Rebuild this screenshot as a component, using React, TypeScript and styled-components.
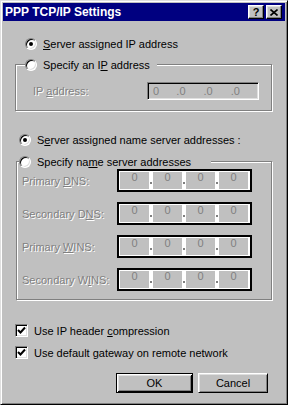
import React from 'react';
import styled, { createGlobalStyle } from 'styled-components';

const GlobalStyle = createGlobalStyle`
  html, body {
    margin: 0;
    padding: 0;
    background: #c0c0c0;
  }
  body {
    font-family: "Liberation Sans", Arial, sans-serif;
    font-size: 11px;
  }
`;

const Window = styled.div`
  width: 288px;
  height: 405px;
  box-sizing: border-box;
  background: #c0c0c0;
  border: 1px solid;
  border-color: #dfdfdf #000 #000 #dfdfdf;
  box-shadow: inset 1px 1px #fff, inset -1px -1px #808080;
  padding: 2px;
  display: flex;
  flex-direction: column;
`;

const TitleBar = styled.div`
  height: 18px;
  flex-shrink: 0;
  background: #000080;
  display: flex;
  align-items: center;
  padding: 0 3px 0 2px;
`;

const TitleText = styled.span`
  flex: 1;
  color: #fff;
  font-weight: bold;
  font-size: 12px;
  white-space: nowrap;
`;

const CaptionButton = styled.span<{ $gap?: number }>`
  width: 16px;
  height: 14px;
  box-sizing: border-box;
  margin-left: ${p => p.$gap ?? 0}px;
  background: #c0c0c0;
  border: 1px solid;
  border-color: #fff #000 #000 #fff;
  box-shadow: inset -1px -1px #808080, inset 1px 1px #dfdfdf;
  display: flex;
  align-items: center;
  justify-content: center;
  color: #000;
  font-weight: bold;
  font-size: 11px;
  line-height: 1;
`;

const Body = styled.div`
  display: flex;
  flex-direction: column;
  padding: 0 17px 0 12px;
`;

const OptionRow = styled.div<{ $top: number; $indent?: number }>`
  display: flex;
  align-items: center;
  height: 13px;
  gap: 6px;
  margin-top: ${p => p.$top}px;
  margin-left: ${p => p.$indent ?? 0}px;
`;

const Label = styled.span<{ $disabled?: boolean; $w?: number }>`
  color: ${p => (p.$disabled ? '#808080' : '#000')};
  text-shadow: ${p => (p.$disabled ? '1px 1px 0 #fff' : 'none')};
  white-space: nowrap;
  ${p => (p.$w ? `width: ${p.$w}px; flex-shrink: 0;` : '')}
`;

const RadioCircle = styled.span`
  width: 12px;
  height: 12px;
  box-sizing: border-box;
  flex-shrink: 0;
  border-radius: 50%;
  background: #fff;
  border: 1px solid;
  border-color: #808080 #fff #fff #808080;
  box-shadow: inset 1px 1px #000, inset -1px -1px #dfdfdf;
  display: flex;
  align-items: center;
  justify-content: center;
`;

const RadioDot = styled.span`
  width: 4px;
  height: 4px;
  border-radius: 50%;
  background: #000;
`;

const CheckBox = styled.span`
  width: 13px;
  height: 13px;
  box-sizing: border-box;
  flex-shrink: 0;
  background: #fff;
  border: 1px solid;
  border-color: #808080 #fff #fff #808080;
  box-shadow: inset 1px 1px #000, inset -1px -1px #dfdfdf;
  display: flex;
  align-items: center;
  justify-content: center;
`;

const Group = styled.fieldset<{ $top: number; $left: number; $width: number }>`
  margin: ${p => p.$top}px 0 0 ${p => p.$left}px;
  width: ${p => p.$width}px;
  min-width: 0;
  box-sizing: border-box;
  padding: 0;
  border: 1px solid #808080;
  box-shadow: inset 1px 1px #fff, 1px 1px #fff;
`;

const GroupContent = styled.div<{ $pad: string }>`
  padding: ${p => p.$pad};
`;

const Legend = styled.legend<{ $ml: number; $w: number }>`
  margin-left: ${p => p.$ml}px;
  width: ${p => p.$w}px;
  height: 13px;
  padding: 0;
  background: #c0c0c0;
  display: flex;
  align-items: center;
  gap: 6px;
`;

const FieldRow = styled.div`
  display: flex;
  align-items: center;
`;

const AddrGrid = styled.div`
  display: grid;
  grid-template-columns: 95px 135px;
  grid-auto-rows: 23px;
  row-gap: 10px;
  align-items: center;
`;

const IpBox = styled.div`
  width: 112px;
  height: 18px;
  box-sizing: border-box;
  border: 1px solid;
  border-color: #808080 #fff #fff #808080;
  box-shadow: inset 1px 1px #000, inset -1px -1px #dfdfdf;
  background: #c0c0c0;
  display: flex;
  align-items: center;
  padding-left: 1px;
  color: #808080;
`;

const IpPart = styled.span<{ $pad: number }>`
  width: 28px;
  padding-left: ${p => p.$pad}px;
  box-sizing: border-box;
  white-space: pre;
`;

const AddrBox = styled.div`
  width: 135px;
  height: 23px;
  box-sizing: border-box;
  border: 2px solid #000;
  background: #fff;
  display: flex;
  padding: 1px 2px 1px 1px;
`;

const AddrPart = styled.div`
  width: 29px;
  background: #c0c0c0;
  color: #808080;
  text-align: center;
  line-height: 11px;
`;

const AddrSep = styled.div`
  width: 4px;
  box-sizing: border-box;
  display: flex;
  justify-content: center;
  align-items: flex-end;
  padding-bottom: 5px;
`;

const SepDot = styled.span`
  width: 2px;
  height: 2px;
  background: #808080;
`;

const ButtonRow = styled.div`
  display: flex;
  justify-content: flex-end;
  gap: 5px;
  margin-top: 14px;
`;

const PushButton = styled.button<{ $w: number; $default?: boolean }>`
  width: ${p => p.$w}px;
  height: 20px;
  box-sizing: border-box;
  padding: 0;
  font-family: "Liberation Sans", Arial, sans-serif;
  font-size: 11px;
  color: #000;
  background: #c0c0c0;
  border: 1px solid;
  border-color: ${p => (p.$default ? '#000' : '#fff #000 #000 #fff')};
  box-shadow: ${p =>
    p.$default
      ? 'inset 1px 1px #fff, inset -1px -1px #000, inset 2px 2px #dfdfdf, inset -2px -2px #808080'
      : 'inset 1px 1px #dfdfdf, inset -1px -1px #808080'};
`;

const Radio = ({ checked }: { checked?: boolean }) => (
  <RadioCircle>{checked && <RadioDot />}</RadioCircle>
);

const Check = () => (
  <CheckBox>
    <svg width="9" height="9" viewBox="0 0 9 9">
      <polyline points="1,4 3.5,6.5 8,1.5" fill="none" stroke="#000" strokeWidth="2" />
    </svg>
  </CheckBox>
);

const CloseIcon = () => (
  <svg width="8" height="7" viewBox="0 0 8 7">
    <path d="M0.5 0.5 L7.5 6.5 M7.5 0.5 L0.5 6.5" stroke="#000" strokeWidth="1.6" />
  </svg>
);

const AddressField = () => (
  <AddrBox>
    {[0, 1, 2, 3].map(i => (
      <React.Fragment key={i}>
        {i > 0 && (
          <AddrSep>
            <SepDot />
          </AddrSep>
        )}
        <AddrPart>0</AddrPart>
      </React.Fragment>
    ))}
  </AddrBox>
);

const servers = [
  { pre: 'Primary ', key: 'D', post: 'NS:' },
  { pre: 'Secondary D', key: 'N', post: 'S:' },
  { pre: 'Primary ', key: 'W', post: 'INS:' },
  { pre: 'Secondary W', key: 'I', post: 'NS:' },
];

export default function App() {
  return (
    <>
      <GlobalStyle />
      <Window>
        <TitleBar>
          <TitleText>PPP TCP/IP Settings</TitleText>
          <CaptionButton>?</CaptionButton>
          <CaptionButton $gap={2}>
            <CloseIcon />
          </CaptionButton>
        </TitleBar>
        <Body>
          <OptionRow $top={16} $indent={10}>
            <Radio checked />
            <Label>
              <u>S</u>erver assigned IP address
            </Label>
          </OptionRow>

          <Group $top={8} $left={0} $width={257}>
            <Legend $ml={9} $w={132}>
              <Radio />
              <Label>
                Specify an I<u>P</u> address
              </Label>
            </Legend>
            <GroupContent $pad="11px 0 10px 17px">
              <FieldRow>
                <Label $disabled $w={114}>
                  IP <u>a</u>ddress:
                </Label>
                <IpBox>
                  <IpPart $pad={4}>0</IpPart>
                  <IpPart $pad={0}>.0</IpPart>
                  <IpPart $pad={0}>.0</IpPart>
                  <IpPart $pad={0}>.0</IpPart>
                </IpBox>
              </FieldRow>
            </GroupContent>
          </Group>

          <OptionRow $top={22} $indent={4}>
            <Radio checked />
            <Label>
              S<u>e</u>rver assigned name server addresses :
            </Label>
          </OptionRow>

          <Group $top={9} $left={1} $width={256}>
            <Legend $ml={2} $w={192}>
              <Radio />
              <Label>
                Specify na<u>m</u>e server addresses
              </Label>
            </Legend>
            <GroupContent $pad="1px 0 8px 5px">
              <AddrGrid>
                {servers.map(s => (
                  <React.Fragment key={s.pre + s.key}>
                    <Label $disabled>
                      {s.pre}
                      <u>{s.key}</u>
                      {s.post}
                    </Label>
                    <AddressField />
                  </React.Fragment>
                ))}
              </AddrGrid>
            </GroupContent>
          </Group>

          <OptionRow $top={24}>
            <Check />
            <Label>
              Use IP header <u>c</u>ompression
            </Label>
          </OptionRow>
          <OptionRow $top={9}>
            <Check />
            <Label>
              Use default <u>g</u>ateway on remote network
            </Label>
          </OptionRow>

          <ButtonRow>
            <PushButton $w={77} $default>
              OK
            </PushButton>
            <PushButton $w={70}>Cancel</PushButton>
          </ButtonRow>
        </Body>
      </Window>
    </>
  );
}
